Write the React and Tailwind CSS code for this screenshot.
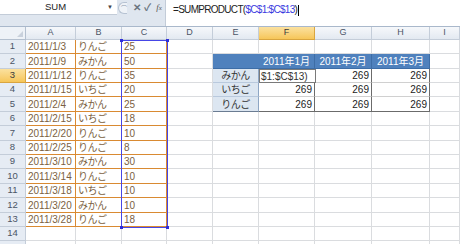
const rows = [
  ["2011/1/3", "りんご", 25],
  ["2011/1/9", "みかん", 50],
  ["2011/1/12", "りんご", 35],
  ["2011/1/15", "いちご", 20],
  ["2011/2/4", "みかん", 25],
  ["2011/2/15", "いちご", 18],
  ["2011/2/20", "りんご", 10],
  ["2011/2/25", "りんご", 8],
  ["2011/3/10", "みかん", 30],
  ["2011/3/14", "りんご", 10],
  ["2011/3/18", "いちご", 10],
  ["2011/3/20", "みかん", 10],
  ["2011/3/28", "りんご", 18],
];

const heights = ["h-[14px]", "h-[15px]", "h-[14px]", "h-[14px]", "h-[15px]", "h-[14px]", "h-[15px]", "h-[14px]", "h-[14px]", "h-[15px]", "h-[14px]", "h-[15px]", "h-[14px]", "h-[14px]", "h-[14px]"];

const cols = ["A", "B", "C", "D", "E", "F", "G", "H", "I"];
const months = ["2011年1月", "2011年2月", "2011年3月"];
const fruits = ["みかん", "いちご", "りんご"];

const grid = "border-r border-b border-[#dadcdf]";
const orange = "border-r border-b border-[#d98a32]";

const Cell = ({ className = "", children }) => (
  <div className={`flex items-center overflow-hidden whitespace-nowrap ${className}`}>{children}</div>
);

const tableCell = (r, c) => {
  // E2:H5 集計表
  if (r === 1) {
    if (c === 4) return <Cell className="bg-[#4f81bd] border-b border-[#3d6da6]" />;
    return (
      <Cell className="bg-[#4f81bd] border-r border-b border-[#3d6da6] justify-center text-white text-[10px]">
        {months[c - 5]}
      </Cell>
    );
  }
  const f = fruits[r - 2];
  if (c === 4)
    return (
      <Cell className={`bg-[#dce6f1] border-r border-[#8ea6c4] justify-center text-[10px] text-[#333] tracking-[-0.5px] ${r === 4 ? "border-b border-b-[#6b7c92]" : "border-b border-b-[#b9c9dd]"}`}>
        {f}
      </Cell>
    );
  if (r === 2 && c === 5)
    return (
      <Cell className="bg-white border border-[#7a7a7a] pl-[1px] text-[10px] text-[#333] relative z-10 -mr-px">
        $1:$C$13)
      </Cell>
    );
  return (
    <Cell className={`bg-white border-r border-[#6b6b6b] justify-end pr-[2px] text-[10px] text-[#222] ${r === 4 ? "border-b border-b-[#6b6b6b]" : "border-b border-b-[#d0d0d0]"}`}>
      269
    </Cell>
  );
};

export default function App() {
  return (
    <div className="relative w-[460px] h-[244px] overflow-hidden bg-white font-['Liberation_Sans','Noto_Sans_CJK_JP',sans-serif]">
      {/* 数式バー */}
      <div className="flex h-[27px] bg-[#dfe6ef] border-b border-[#a9b8cb]">
        <div className="w-[165px] flex flex-col">
          <div className="flex h-[15px] items-center">
            <div className="w-[117px] h-[15px] bg-white flex items-center border-b border-[#c3ccd8]">
              <span className="flex-1 text-center text-[9.5px] text-[#222] pl-[4px]">SUM</span>
              <span className="text-[6px] text-[#444] pr-[4px]">▼</span>
            </div>
            <div className="flex items-center h-[13px] ml-[1px]">
              <div className="w-[9px] h-[12px] rounded-l-full border border-r-0 border-[#b6c2d2] bg-[#eef2f7] flex items-center justify-end">
                <span className="text-[6px] text-[#8a97aa] leading-none">⌒</span>
              </div>
              <span className="ml-[6px] text-[10px] font-bold text-[#6a7480] leading-none">✕</span>
              <span className="ml-[3px] text-[10px] font-bold text-[#6a7480] leading-none">✓</span>
              <span className="ml-[5px] text-[9px] italic text-[#555] font-['Liberation_Serif',serif] leading-none">
                f<span className="text-[7px]">x</span>
              </span>
            </div>
          </div>
        </div>
        <div className="flex-1 bg-white h-[26px] border-l border-[#c3ccd8] pl-[7px] pt-[2px] text-[10px] text-[#222] tracking-[-0.7px]">
          =SUMPRODUCT(<span className="text-[#3a3ae0]">$C$1:$C$13</span>)<span className="inline-block w-px h-[11px] bg-black align-middle ml-[1px]" />
        </div>
      </div>

      {/* シート */}
      <div className="grid grid-cols-[26px_50px_46px_45px_46px_46px_56px_57px_58px_1fr]">
        {/* 列見出し */}
        <div className="h-[13px] bg-[#eef2f7] border-r border-b border-[#b4c0cf] flex items-end justify-end pr-[2px] pb-[2px]">
          <div className="w-0 h-0 border-l-[6px] border-l-transparent border-b-[6px] border-b-[#c9d1dc]" />
        </div>
        {cols.map((c) => (
          <div
            key={c}
            className={`h-[13px] flex items-center justify-center text-[9px] border-r border-b ${
              c === "F"
                ? "bg-gradient-to-b from-[#fbe19e] to-[#f6c658] border-[#d9a53f] text-[#3b3b3b]"
                : "bg-gradient-to-b from-[#f6f8fb] to-[#e3e9f1] border-[#c4cdd9] text-[#4a5566]"
            }`}
          >
            {c}
          </div>
        ))}

        {heights.map((h, r) => {
          const d = rows[r];
          return [
            <div
              key={`rh${r}`}
              className={`${h} flex items-center justify-center text-[9.5px] border-r border-b ${
                r === 2
                  ? "bg-gradient-to-b from-[#fbe19e] to-[#f6c658] border-[#d9a53f] text-[#3b3b3b]"
                  : "bg-[#e6ecf4] border-[#c4cdd9] text-[#4a5566]"
              }`}
            >
              {r + 1}
            </div>,
            ...cols.map((c, ci) => {
              const key = `${r}-${c}`;
              if (d && ci < 3) {
                const v = d[ci];
                return (
                  <Cell key={key} className={`${h} ${orange} pl-[2px] text-[10px] text-[#7b5f42] ${ci === 1 ? "tracking-[-0.5px]" : ""}`}>
                    {v}
                  </Cell>
                );
              }
              if (r >= 1 && r <= 4 && ci >= 4 && ci <= 7) {
                return <div key={key} className={`${h} grid`}>{tableCell(r, ci)}</div>;
              }
              return <Cell key={key} className={`${h} ${grid}`} />;
            }),
          ];
        })}
      </div>

      {/* 参照範囲 $C$1:$C$13 */}
      <div className="absolute left-[121px] top-[40px] w-[47px] h-[188px] border border-[#4646e6] pointer-events-none">
        <div className="absolute -left-[2px] -top-[2px] w-[3px] h-[3px] bg-[#2f2fd8]" />
        <div className="absolute -right-[2px] -top-[2px] w-[3px] h-[3px] bg-[#2f2fd8]" />
        <div className="absolute -left-[2px] -bottom-[2px] w-[3px] h-[3px] bg-[#2f2fd8]" />
        <div className="absolute -right-[2px] -bottom-[2px] w-[3px] h-[3px] bg-[#2f2fd8]" />
      </div>
    </div>
  );
}
